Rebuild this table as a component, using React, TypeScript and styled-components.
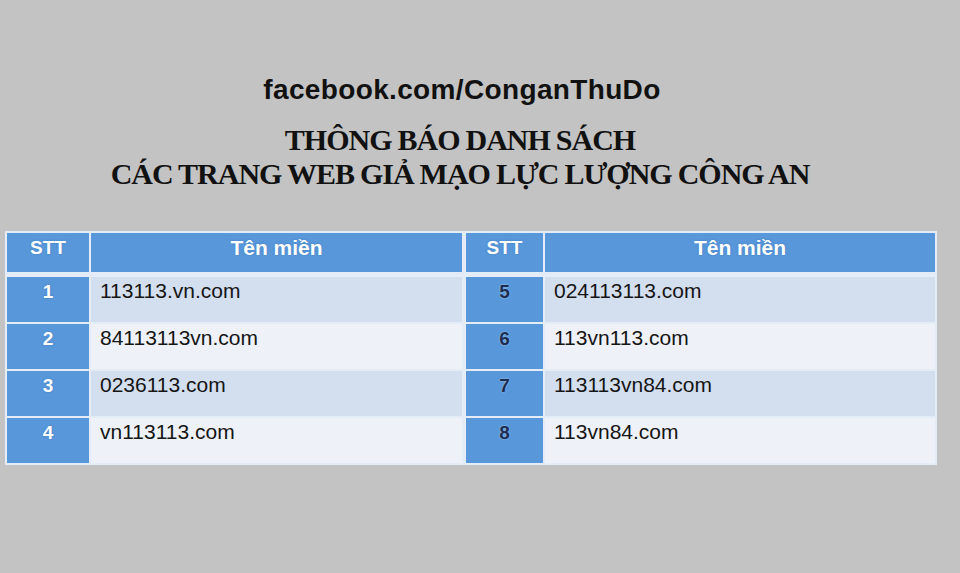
import React from "react";
import styled, { createGlobalStyle } from "styled-components";

const Global = createGlobalStyle`
  html, body { margin: 0; padding: 0; }
  body {
    background: #c3c3c3;
    width: 960px;
    height: 573px;
    overflow: hidden;
  }
`;

const Page = styled.div`
  width: 960px;
  height: 573px;
  display: flex;
  flex-direction: column;
  align-items: stretch;
  padding-top: 74px;
  box-sizing: border-box;
`;

const Source = styled.div`
  font-family: "Liberation Sans", Arial, sans-serif;
  font-weight: bold;
  font-size: 28px;
  line-height: 32px;
  color: #111;
  text-align: center;
  padding-right: 36px;
  letter-spacing: 0.35px;
`;

const Title = styled.h1`
  margin: 17px 0 0 0;
  font-family: "Liberation Serif", "Times New Roman", serif;
  font-weight: bold;
  font-size: 30px;
  line-height: 34px;
  color: #111;
  text-align: center;
  letter-spacing: -1px;
  word-spacing: -0.5px;
  padding-right: 40px;
`;

const Tables = styled.div`
  margin-top: 40px;
  padding-left: 5px;
  display: flex;
`;

const Table = styled.div<{ $w: number }>`
  width: ${(p) => p.$w}px;
  box-sizing: border-box;
  background: #e3ecf7;
  padding: 2px;
  display: flex;
  flex-direction: column;
  gap: 2px;
`;

const Row = styled.div<{ $stt: number; $header?: boolean }>`
  display: grid;
  grid-template-columns: ${(p) => p.$stt}px 1fr;
  column-gap: 2px;
  height: ${(p) => (p.$header ? 39 : 45)}px;
  margin-bottom: ${(p) => (p.$header ? 3 : 0)}px;
`;

const HeadCell = styled.div<{ $size: number }>`
  background: #5797da;
  color: #fff;
  font-family: "Liberation Sans", Arial, sans-serif;
  font-weight: bold;
  font-size: ${(p) => p.$size}px;
  line-height: 24px;
  padding-top: 3px;
  text-align: center;
  text-shadow: 0 0 2px rgba(40, 80, 140, 0.35);
`;

const NumCell = styled.div<{ $dark?: boolean }>`
  background: #5797da;
  color: ${(p) => (p.$dark ? "#1b2d52" : "#ffffff")};
  font-family: "Liberation Sans", Arial, sans-serif;
  font-weight: bold;
  font-size: 19px;
  line-height: 24px;
  padding-top: 3px;
  text-align: center;
  text-shadow: ${(p) =>
    p.$dark
      ? "0 0 2px rgba(220, 235, 250, 0.7)"
      : "0 0 2px rgba(30, 70, 130, 0.35)"};
`;

const DomainCell = styled.div<{ $alt: boolean }>`
  background: ${(p) => (p.$alt ? "#eef1f8" : "#d3deef")};
  color: #151515;
  font-family: "Liberation Sans", Arial, sans-serif;
  font-size: 21px;
  line-height: 24px;
  padding: 2px 0 0 9px;
`;

const left = [
  ["1", "113113.vn.com"],
  ["2", "84113113vn.com"],
  ["3", "0236113.com"],
  ["4", "vn113113.com"],
];
const right = [
  ["5", "024113113.com"],
  ["6", "113vn113.com"],
  ["7", "113113vn84.com"],
  ["8", "113vn84.com"],
];

function DomainTable({
  rows,
  width,
  stt,
  dark,
}: {
  rows: string[][];
  width: number;
  stt: number;
  dark?: boolean;
}) {
  return (
    <Table $w={width}>
      <Row $stt={stt} $header>
        <HeadCell $size={19}>STT</HeadCell>
        <HeadCell $size={21}>Tên miền</HeadCell>
      </Row>
      {rows.map(([n, d], i) => (
        <Row key={n} $stt={stt}>
          <NumCell $dark={dark}>{n}</NumCell>
          <DomainCell $alt={i % 2 === 1}>{d}</DomainCell>
        </Row>
      ))}
    </Table>
  );
}

export default function App() {
  return (
    <>
      <Global />
      <Page>
        <Source>facebook.com/ConganThuDo</Source>
        <Title>
          THÔNG BÁO DANH SÁCH
          <br />
          CÁC TRANG WEB GIẢ MẠO LỰC LƯỢNG CÔNG AN
        </Title>
        <Tables>
          <DomainTable rows={left} width={459} stt={82} />
          <DomainTable rows={right} width={473} stt={77} dark />
        </Tables>
      </Page>
    </>
  );
}
